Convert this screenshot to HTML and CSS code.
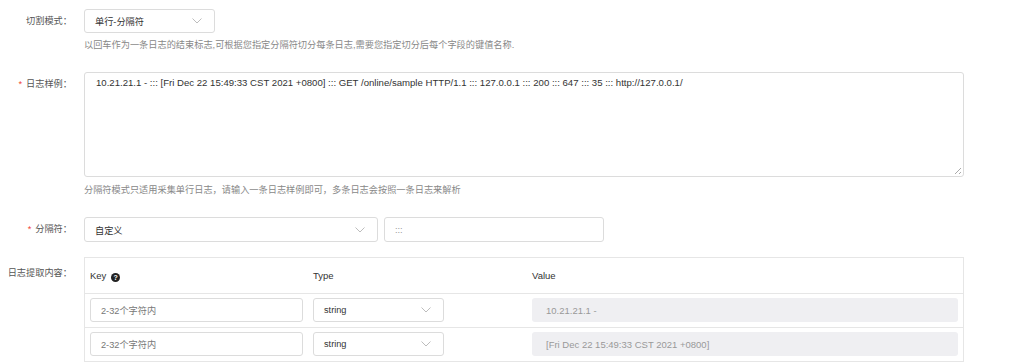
FILE: index.html
```html
<!DOCTYPE html>
<html lang="zh-CN">
<head>
    <meta charset="UTF-8">
    <title>日志采集配置</title>
    <link rel="stylesheet" href="styles.css">
</head>
<body>
    <div class="form">
        <div class="form-item first">
            <div class="label">切割模式：</div>
            <div class="control">
                <div class="select mode-select">
                    <span>单行-分隔符</span>
                    <svg class="arrow" width="10" height="6" viewBox="0 0 10 6"><polyline points="0.5,0.5 5,5 9.5,0.5" fill="none" stroke="#bdbdbd" stroke-width="1"/></svg>
                </div>
                <div class="help">以回车作为一条日志的结束标志,可根据您指定分隔符切分每条日志,需要您指定切分后每个字段的键值名称.</div>
            </div>
        </div>

        <div class="form-item sample">
            <div class="label"><span class="req">*</span>日志样例：</div>
            <div class="control">
                <div class="textarea">10.21.21.1 - ::: [Fri Dec 22 15:49:33 CST 2021 +0800] ::: GET /online/sample HTTP/1.1 ::: 127.0.0.1 ::: 200 ::: 647 ::: 35 ::: http://127.0.0.1/<span class="grip"></span></div>
                <div class="help">分隔符模式只适用采集单行日志，请输入一条日志样例即可，多条日志会按照一条日志来解析</div>
            </div>
        </div>

        <div class="form-item sep">
            <div class="label"><span class="req">*</span>分隔符：</div>
            <div class="control row">
                <div class="select sep-select">
                    <span>自定义</span>
                    <svg class="arrow" width="10" height="6" viewBox="0 0 10 6"><polyline points="0.5,0.5 5,5 9.5,0.5" fill="none" stroke="#bdbdbd" stroke-width="1"/></svg>
                </div>
                <div class="input sep-input">:::</div>
            </div>
        </div>

        <div class="form-item extract">
            <div class="label">日志提取内容：</div>
            <div class="control">
                <table class="fields">
                    <tr>
                        <th class="col-key">Key <span class="qmark">?</span></th>
                        <th class="col-type">Type</th>
                        <th>Value</th>
                    </tr>
                    <tr>
                        <td><div class="input key-input">2-32个字符内</div></td>
                        <td><div class="select type-select"><span>string</span><svg class="arrow" width="10" height="6" viewBox="0 0 10 6"><polyline points="0.5,0.5 5,5 9.5,0.5" fill="none" stroke="#bdbdbd" stroke-width="1"/></svg></div></td>
                        <td><div class="value">10.21.21.1 -</div></td>
                    </tr>
                    <tr>
                        <td><div class="input key-input">2-32个字符内</div></td>
                        <td><div class="select type-select"><span>string</span><svg class="arrow" width="10" height="6" viewBox="0 0 10 6"><polyline points="0.5,0.5 5,5 9.5,0.5" fill="none" stroke="#bdbdbd" stroke-width="1"/></svg></div></td>
                        <td><div class="value">[Fri Dec 22 15:49:33 CST 2021 +0800]</div></td>
                    </tr>
                </table>
            </div>
        </div>
    </div>
</body>
</html>
```

FILE: styles.css
```css
body {
    margin: 0;
    background: #fff;
    font-family: "Liberation Sans", "Noto Sans CJK SC", sans-serif;
    font-size: 9.2px;
    color: #333;
    overflow: hidden;
}
.form {
    padding-top: 9px;
}
.form-item {
    display: flex;
}
.label {
    width: 72px;
    padding-right: 12px;
    text-align: right;
    line-height: 24px;
    color: #555;
    flex-shrink: 0;
}
.req {
    color: #f04134;
    margin-right: 4px;
}
.control {
    flex: 1;
}
.row {
    display: flex;
    gap: 6px;
}
.help {
    color: #888;
    line-height: 14px;
    margin-top: 5px;
}
.select, .input {
    box-sizing: border-box;
    height: 24px;
    border: 1px solid #dcdcdc;
    border-radius: 3px;
    background: #fff;
    display: flex;
    align-items: center;
    padding: 0 10px;
}
.select {
    justify-content: space-between;
}
.arrow {
    margin-right: 2px;
}
.mode-select {
    width: 131px;
}
.sample {
    margin-top: 20px;
}
.textarea {
    position: relative;
    box-sizing: border-box;
    width: 880px;
    height: 105px;
    border: 1px solid #dcdcdc;
    border-radius: 3px;
    padding: 4px 11px;
    font-size: 9.6px;
    line-height: 12px;
}
.grip {
    position: absolute;
    right: 2px;
    bottom: 2px;
    width: 6px;
    height: 6px;
    background: linear-gradient(135deg, transparent 45%, #aaa 45%, #aaa 55%, transparent 55%, transparent 75%, #aaa 75%, #aaa 85%, transparent 85%);
}
.sample .help {
    margin-top: 6px;
}
.sep {
    margin-top: 20px;
}
.sep .label {
    line-height: 25px;
}
.sep-select {
    width: 294px;
    height: 25px;
}
.sep-input {
    width: 220px;
    height: 25px;
    color: #999;
}
.extract {
    margin-top: 15px;
}
.extract .label {
    line-height: 33px;
}
.fields {
    width: 880px;
    border-collapse: collapse;
    border: 1px solid #e6e6e6;
}
.fields th {
    height: 35px;
    padding: 0 5px;
    text-align: left;
    font-weight: normal;
    font-size: 9.5px;
    color: #333;
}
.fields td {
    padding: 4px 5px 5px;
    border-top: 1px solid #e6e6e6;
}
.col-key {
    width: 211px;
}
.col-type {
    width: 212px;
}
.qmark {
    display: inline-block;
    width: 9px;
    height: 9px;
    border-radius: 50%;
    background: #222;
    color: #fff;
    font-size: 7px;
    font-weight: bold;
    line-height: 9px;
    text-align: center;
    vertical-align: -1px;
    margin-left: 2px;
}
.key-input {
    width: 213px;
    color: #777;
}
.type-select {
    width: 131px;
}
.value {
    box-sizing: border-box;
    height: 24px;
    width: 426px;
    border-radius: 3px;
    background: #efeff2;
    color: #999;
    display: flex;
    align-items: center;
    padding: 0 14px;
    font-size: 9.5px;
}
```
